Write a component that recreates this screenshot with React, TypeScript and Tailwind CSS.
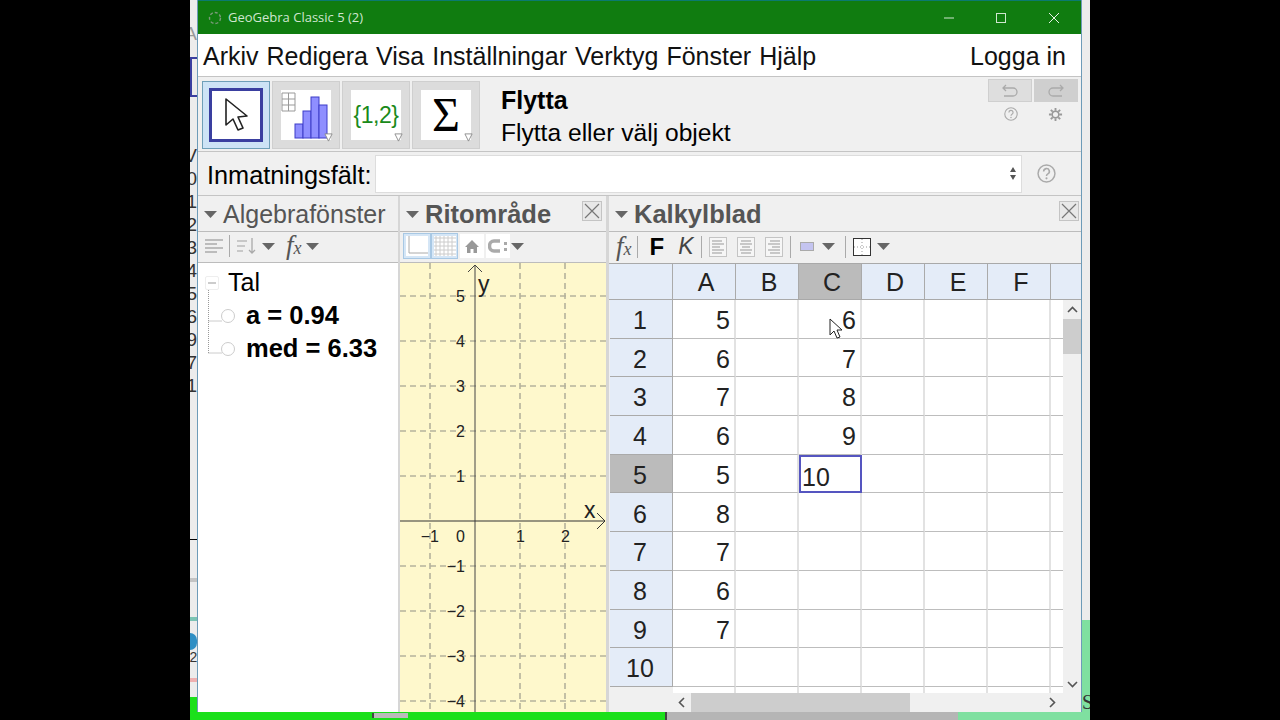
import type { ReactNode } from "react";

const MENU = ["Arkiv", "Redigera", "Visa", "Inställningar", "Verktyg", "Fönster", "Hjälp"];
const COLS = ["A", "B", "C", "D", "E", "F"];
const ROWS = [1, 2, 3, 4, 5, 6, 7, 8, 9, 10];
const VALUES_A = ["5", "6", "7", "6", "5", "8", "7", "6", "7", ""];
const VALUES_C = ["6", "7", "8", "9", "", "", "", "", "", ""];
const EDGE_DIGITS = ["V", "0", "1", "2", "3", "4", "5", "6", "9", "7", "1"];

function Caret({ className = "" }: { className?: string }) {
  return (
    <svg width="13" height="7" viewBox="0 0 13 7" className={className}>
      <path d="M0 0h13L6.5 7z" fill="#666" />
    </svg>
  );
}

function CornerMark() {
  return (
    <svg width="9" height="9" viewBox="0 0 10 10" className="absolute right-[-2px] bottom-[-2px]">
      <path d="M1 1h8L5 9z" fill="#fff" stroke="#888" />
    </svg>
  );
}

function CloseBox() {
  return (
    <div className="w-[20px] h-[20px] border border-[#c4c4c4] bg-[#e8e8e8] flex items-center justify-center">
      <svg width="16" height="16" viewBox="0 0 16 16">
        <path d="M1 1l14 14M15 1L1 15" stroke="#777" strokeWidth="1.2" />
      </svg>
    </div>
  );
}

function ToolButton({ children, active }: { children: ReactNode; active?: boolean }) {
  return (
    <div
      className={
        active
          ? "w-[68px] h-[68px] bg-[#cde3f6] border border-[#6f9fb8] flex items-center justify-center"
          : "w-[68px] h-[68px] bg-[#dcdcdc] border border-[#cfcfcf] flex items-center justify-center"
      }
    >
      {children}
    </div>
  );
}

function AlignIcon({ lines }: { lines: string[] }) {
  return (
    <svg width="18" height="20" viewBox="0 0 18 20">
      <rect x="0.5" y="0.5" width="17" height="19" fill="#f6f6f6" stroke="#c4c4c4" />
      {lines.map((d) => (
        <path key={d} d={d} stroke="#999" strokeWidth="1" />
      ))}
    </svg>
  );
}

function FxIcon() {
  return (
    <span className="font-['Liberation_Serif',serif] italic text-[27px] leading-none text-[#555]">
      f<span className="text-[18px]">x</span>
    </span>
  );
}

function Divider() {
  return <div className="w-px h-[22px] bg-[#aaa]" />;
}

function PanelHeader({ title, bold, close, tight }: { title: string; bold?: boolean; close?: boolean; tight?: boolean }) {
  return (
    <div
      className={
        tight
          ? "h-[36px] shrink-0 flex items-center pl-[6px] pr-[2px] pt-[2px] bg-[#f0f0f0] border-b border-[#bcbcbc] overflow-hidden"
          : "h-[36px] shrink-0 flex items-center pl-[6px] pr-[4px] pt-[2px] bg-[#f0f0f0] border-b border-[#bcbcbc] overflow-hidden"
      }
    >
      <Caret />
      <span
        className={
          bold
            ? "ml-[6px] text-[25.5px] font-bold text-[#555] whitespace-nowrap"
            : "ml-[6px] text-[25px] text-[#555] whitespace-nowrap"
        }
      >
        {title}
      </span>
      {close && (
        <div className="ml-auto mb-[7px]">
          <CloseBox />
        </div>
      )}
    </div>
  );
}

function AlgebraPanel() {
  return (
    <div className="w-[200px] shrink-0 flex flex-col bg-white">
      <PanelHeader title="Algebrafönster" />
      <div className="h-[31px] shrink-0 bg-[#f0f0f0] border-b border-[#bcbcbc] flex items-center pl-[6px] pb-[2px]">
        <svg width="20" height="20" viewBox="0 0 20 20">
          <path d="M1 4h18M1 8h12M1 12h18M1 16h12" stroke="#aaa" strokeWidth="1.4" />
        </svg>
        <div className="ml-[5px]"><Divider /></div>
        <svg width="22" height="20" viewBox="0 0 22 20" className="ml-[6px]">
          <path d="M1 5h10M1 10h8M1 15h6" stroke="#bbb" strokeWidth="1.4" />
          <path d="M16 2v15M13 14l3 3 3-3" stroke="#aaa" strokeWidth="1.3" fill="none" />
        </svg>
        <Caret className="ml-[4px]" />
        <div className="ml-[11px]">
          <FxIcon />
        </div>
        <Caret className="ml-[4px]" />
      </div>
      <div className="relative flex-1 pt-[3px] text-black">
        <div className="h-[33px] flex items-center pl-[7px]">
          <div className="w-[14px] h-[14px] border border-[#eee] rounded-[2px] flex items-center justify-center">
            <div className="w-[8px] h-[2px] bg-[#ccc]" />
          </div>
          <span className="ml-[9px] text-[25px]">Tal</span>
        </div>
        {["a = 0.94", "med = 6.33"].map((row) => (
          <div key={row} className="h-[33px] flex items-center pl-[23px]">
            <div className="w-[14px] h-[14px] rounded-full border border-[#ccc] bg-white" />
            <span className="ml-[11px] text-[25.5px] font-bold whitespace-nowrap">{row}</span>
          </div>
        ))}
        <svg width="20" height="70" viewBox="0 0 20 70" className="absolute left-[10px] top-[27px]">
          <path d="M0.5 0V63M0.5 31H14M0.5 63H14" stroke="#999" strokeDasharray="1 1" fill="none" />
        </svg>
      </div>
    </div>
  );
}

function GraphPanel() {
  const hLines = [33, 78, 123, 168, 213, 303, 348, 393, 438];
  const vLines = [30, 120, 165];
  const yLabels: [string, number][] = [
    ["5", 39], ["4", 84], ["3", 129], ["2", 174], ["1", 219],
    ["−1", 309], ["−2", 354], ["−3", 399], ["−4", 444],
  ];
  return (
    <div className="w-[206px] shrink-0 flex flex-col bg-[#fef8cc]">
      <PanelHeader title="Ritområde" bold close />
      <div className="h-[31px] shrink-0 bg-[#f0f0f0] border-b border-[#bcbcbc] flex items-center pl-[3px] pb-[2px]">
        <div className="w-[28px] h-[26px] bg-[#d5e6f6] border border-[#a8c8e4] flex items-center justify-center">
          <svg width="22" height="20" viewBox="0 0 22 20">
            <rect width="22" height="20" fill="#fff" />
            <path d="M3 0v17h19" stroke="#aaa" fill="none" />
          </svg>
        </div>
        <div className="w-[27px] h-[26px] bg-[#d5e6f6] border border-[#a8c8e4] flex items-center justify-center">
          <svg width="22" height="20" viewBox="0 0 22 20">
            <rect width="22" height="20" fill="#fff" />
            <path d="M2 0v20M6 0v20M10 0v20M14 0v20M18 0v20M0 2h22M0 6h22M0 10h22M0 14h22M0 18h22" stroke="#ccc" strokeWidth="1" />
          </svg>
        </div>
        <div className="ml-[2px] w-[24px] h-[24px] bg-white flex items-center justify-center">
          <svg width="16" height="16" viewBox="0 0 16 16">
            <path d="M8 2L1 9h2v6h3.5v-4h3v4H13V9h2z" fill="#999" />
          </svg>
        </div>
        <div className="ml-[2px] w-[24px] h-[24px] bg-white flex items-center justify-center">
          <svg width="20" height="16" viewBox="0 0 20 16">
            <path d="M12 3H6a4.5 5 0 0 0 0 10h6" stroke="#aaa" strokeWidth="3.5" fill="none" />
            <path d="M16 4h3v3h-3zM16 10h3v3h-3z" fill="#aaa" />
          </svg>
        </div>
        <Caret className="ml-[1px]" />
      </div>
      <svg width="206" height="449" viewBox="0 0 206 449" className="block flex-1">
        {hLines.map((y) => (
          <path key={y} d={`M0 ${y}H206`} stroke="#b5b29c" strokeWidth="1.4" strokeDasharray="6 4" />
        ))}
        {vLines.map((x) => (
          <path key={x} d={`M${x} 0V449`} stroke="#b5b29c" strokeWidth="1.6" strokeDasharray="6 4" />
        ))}
        <path d="M75 449V2M68 9l7-7 7 7" stroke="#444" fill="none" />
        <path d="M0 258H204M197 250l8 8-8 8" stroke="#333" fill="none" />
        <g fontSize="16" fill="#222" fontFamily="'Liberation Sans', sans-serif" textAnchor="end">
          {yLabels.map(([t, y]) => (
            <text key={t} x="65" y={y}>{t}</text>
          ))}
          <text x="39" y="279">−1</text>
          <text x="65" y="279">0</text>
          <text x="125" y="279">1</text>
          <text x="170" y="279">2</text>
        </g>
        <text x="78" y="29" fontSize="23" fill="#222" fontFamily="'Liberation Sans', sans-serif">y</text>
        <text x="184" y="255" fontSize="23" fill="#222" fontFamily="'Liberation Sans', sans-serif">x</text>
      </svg>
    </div>
  );
}

function SheetPanel() {
  return (
    <div className="flex-1 min-w-0 flex flex-col bg-[#f0f0f0]">
      <PanelHeader title="Kalkylblad" bold close tight />
      <div className="h-[31px] shrink-0 bg-[#f0f0f0] flex items-center pl-[7px] pb-[2px]">
        <FxIcon />
        <div className="ml-[5px]"><Divider /></div>
        <span className="ml-[12px] text-[24px] font-bold text-black">F</span>
        <span className="ml-[14px] text-[23px] italic text-[#444]">K</span>
        <div className="ml-[7px]"><Divider /></div>
        <div className="ml-[7px] flex gap-[10px]">
          <AlignIcon lines={["M3 4h10", "M3 7h12", "M3 10h8", "M3 13h12", "M3 16h10"]} />
          <AlignIcon lines={["M4 4h10", "M3 7h12", "M5 10h8", "M3 13h12", "M4 16h10"]} />
          <AlignIcon lines={["M5 4h10", "M3 7h12", "M7 10h8", "M3 13h12", "M5 16h10"]} />
        </div>
        <div className="ml-[7px]"><Divider /></div>
        <div className="ml-[9px] w-[14px] h-[9px] bg-[#c4c4f0] border border-[#aaa]" />
        <Caret className="ml-[8px]" />
        <div className="ml-[10px]"><Divider /></div>
        <svg width="18" height="18" viewBox="0 0 18 18" className="ml-[7px]">
          <rect x="0.5" y="0.5" width="17" height="17" fill="#fff" stroke="#333" />
          <path d="M9 1v16M1 9h16" stroke="#999" strokeDasharray="1 2" />
        </svg>
        <Caret className="ml-[6px]" />
      </div>
      <div className="h-[37px] shrink-0 flex bg-[#e4ecf8] border-y border-y-[#a9a9a9] text-[25px] text-[#222] pl-px">
        <div className="w-[63px] border-r border-[#aaa]" />
        {COLS.map((c) => (
          <div
            key={c}
            className={
              c === "C"
                ? "w-[63px] bg-[#bbbbbb] border-r border-[#aaa] flex items-center justify-center pl-[4px] pt-[2px]"
                : "w-[63px] border-r border-[#aaa] flex items-center justify-center pl-[4px] pt-[2px]"
            }
          >
            {c}
          </div>
        ))}
      </div>
      <div className="flex flex-1 min-h-0">
        <div className="w-[454px] shrink-0 overflow-hidden pl-px">
          {ROWS.map((r, i) => (
            <div key={r} className="h-[38.7px] flex text-[25px] text-[#222]">
              <div
                className={
                  r === 5
                    ? "w-[63px] shrink-0 bg-[#bbbbbb] border-r border-b border-[#aaa] flex items-center justify-center pt-[4px] pr-[2px]"
                    : "w-[63px] shrink-0 bg-[#e4ecf8] border-r border-b border-[#aaa] flex items-center justify-center pt-[4px] pr-[2px]"
                }
              >
                {r}
              </div>
              {COLS.map((c) => {
                const value = c === "A" ? VALUES_A[i] : c === "C" ? VALUES_C[i] : "";
                if (c === "C" && r === 5) {
                  return (
                    <div key={c} className="w-[63px] shrink-0 border-2 border-[#5555c0] bg-white flex items-center pl-[1px] pt-[7px]">
                      10
                    </div>
                  );
                }
                return (
                  <div key={c} className="w-[63px] shrink-0 bg-white border-r-2 border-r-[#e2e2e2] border-b border-b-[#bdbdbd] flex items-center justify-end pr-[4px] pt-[4px]">
                    {value}
                  </div>
                );
              })}
              <div className="flex-1 bg-white border-b border-b-[#bdbdbd]" />
            </div>
          ))}
          <div className="h-[6px] flex">
            <div className="w-[63px] shrink-0" />
            {COLS.map((c) => (
              <div key={c} className="w-[63px] shrink-0 bg-white border-r-2 border-r-[#e2e2e2]" />
            ))}
            <div className="flex-1 bg-white" />
          </div>
        </div>
        <div className="flex-1 flex flex-col items-center bg-[#f0f0f0]">
          <svg width="11" height="7" viewBox="0 0 11 7" className="mt-[6px]">
            <path d="M1 6l4.5-4.5L10 6" stroke="#555" strokeWidth="1.6" fill="none" />
          </svg>
          <div className="mt-[6px] w-full h-[35px] bg-[#cdcdcd]" />
          <svg width="11" height="7" viewBox="0 0 11 7" className="mt-auto mb-[5px]">
            <path d="M1 1l4.5 4.5L10 1" stroke="#555" strokeWidth="1.6" fill="none" />
          </svg>
        </div>
      </div>
      <div className="h-[19px] shrink-0 flex items-center pl-[63px] bg-[#f0f0f0]">
        <div className="w-[19px] flex justify-center">
          <svg width="7" height="11" viewBox="0 0 7 11">
            <path d="M6 1L1.5 5.5 6 10" stroke="#555" strokeWidth="1.6" fill="none" />
          </svg>
        </div>
        <div className="w-[219px] h-full bg-[#cdcdcd]" />
        <svg width="7" height="11" viewBox="0 0 7 11" className="ml-[139px]">
          <path d="M1 1l4.5 4.5L1 10" stroke="#555" strokeWidth="1.6" fill="none" />
        </svg>
      </div>
    </div>
  );
}

function TitleBar() {
  return (
    <div className="h-[34px] shrink-0 bg-[#107c10] border-t border-[#0b7a70] flex items-center text-[#cfe6cf]">
      <svg width="14" height="14" viewBox="0 0 14 14" className="ml-[10px]">
        <circle cx="7" cy="7" r="5.5" fill="none" stroke="#7a9a7a" strokeWidth="1.4" strokeDasharray="3 2" />
      </svg>
      <span className="ml-[6px] text-[13px] font-['Open_Sans',sans-serif] whitespace-nowrap">GeoGebra Classic 5 (2)</span>
      <svg width="12" height="12" viewBox="0 0 12 12" className="ml-[580px]">
        <path d="M1 6h10" stroke="#cfe6cf" />
      </svg>
      <svg width="12" height="12" viewBox="0 0 12 12" className="ml-[40px]">
        <rect x="1.5" y="1.5" width="9" height="9" fill="none" stroke="#cfe6cf" />
      </svg>
      <svg width="12" height="12" viewBox="0 0 12 12" className="ml-[41px]">
        <path d="M1 1l10 10M11 1L1 11" stroke="#e8f3e8" />
      </svg>
    </div>
  );
}

function HelpIcon({ size }: { size: number }) {
  return (
    <svg width={size} height={size} viewBox="0 0 18 18">
      <circle cx="9" cy="9" r="8" fill="none" stroke="#aaa" strokeWidth="1.4" />
      <path d="M6.3 7a2.7 2.7 0 1 1 4 2.4c-.9.5-1.3 1-1.3 2" stroke="#aaa" strokeWidth="1.5" fill="none" />
      <circle cx="9" cy="13.6" r="1" fill="#aaa" />
    </svg>
  );
}

function Toolbar() {
  return (
    <div className="h-[76px] shrink-0 bg-[#f0f0f0] border-y border-[#c4c4c4] flex items-center pl-[4px] pt-[2px]">
      <div className="flex gap-[2px]">
        <ToolButton active>
          <div className="w-[54px] h-[54px] bg-white border-[3px] border-[#3a3fa0] flex items-center justify-center">
            <svg width="26" height="36" viewBox="0 0 26 36">
              <path d="M3 2v26l7-6 5 11 5-2-5-11 9-1z" fill="#fff" stroke="#222" strokeWidth="1.6" strokeLinejoin="round" />
            </svg>
          </div>
        </ToolButton>
        <ToolButton>
          <div className="relative w-[50px] h-[50px] bg-white">
            <svg width="50" height="50" viewBox="0 0 50 50">
              <path d="M1 3h13v18H1zM1 9h13M1 15h13M7.5 3v18" stroke="#999" fill="#fff" />
              <g fill="#8f8fff" stroke="#3c3cc8">
                <rect x="14" y="34" width="8" height="14" />
                <rect x="22" y="21" width="8" height="27" />
                <rect x="30" y="7" width="8" height="41" />
                <rect x="38" y="15" width="8" height="33" />
              </g>
            </svg>
            <CornerMark />
          </div>
        </ToolButton>
        <ToolButton>
          <div className="relative w-[50px] h-[50px] bg-white flex items-center justify-center text-[23px] text-[#1a8a1a] tracking-[-0.5px]">
            {"{1,2}"}
            <CornerMark />
          </div>
        </ToolButton>
        <ToolButton>
          <div className="relative w-[50px] h-[50px] bg-white flex items-center justify-center text-[48px] leading-none text-black font-['Liberation_Serif',serif]">
            Σ
            <CornerMark />
          </div>
        </ToolButton>
      </div>
      <div className="ml-[21px] mt-[3px] text-black">
        <div className="text-[25px] font-bold leading-[33px]">Flytta</div>
        <div className="text-[24.6px] leading-[32px]">Flytta eller välj objekt</div>
      </div>
      <div className="ml-auto mr-[3px] self-start flex flex-col">
        <div className="flex gap-[2px]">
          <div className="w-[44px] h-[23px] bg-[#dedede] border border-[#cfcfcf] flex items-center justify-center">
            <svg width="18" height="14" viewBox="0 0 18 14">
              <path d="M2 4h10a4 4 0 0 1 0 8H3M5 1L2 4l3 3" stroke="#aaa" strokeWidth="1.3" fill="none" />
            </svg>
          </div>
          <div className="w-[44px] h-[23px] bg-[#cfcfcf] flex items-center justify-center">
            <svg width="18" height="14" viewBox="0 0 18 14">
              <path d="M16 4H6a4 4 0 0 0 0 8h9M13 1l3 3-3 3" stroke="#aaa" strokeWidth="1.3" fill="none" />
            </svg>
          </div>
        </div>
        <div className="flex mt-[5px]">
          <div className="w-[45px] flex justify-center">
            <HelpIcon size={14} />
          </div>
          <div className="w-[45px] flex justify-center">
            <svg width="15" height="15" viewBox="0 0 16 16">
              <path d="M8 1v3M8 12v3M1 8h3M12 8h3M3 3l2 2M11 11l2 2M13 3l-2 2M5 11l-2 2" stroke="#999" strokeWidth="2" />
              <circle cx="8" cy="8" r="3.5" fill="none" stroke="#999" strokeWidth="1.6" />
            </svg>
          </div>
        </div>
      </div>
    </div>
  );
}

function InputBar() {
  return (
    <div className="h-[44px] shrink-0 bg-[#f0f0f0] border-b border-[#c4c4c4] flex items-center pl-[9px]">
      <span className="text-[25.3px] text-black w-[168px] whitespace-nowrap pt-[5px]">Inmatningsfält:</span>
      <div className="w-[647px] h-[38px] bg-white border border-[#ddd] flex items-center justify-end pr-[4px]">
        <svg width="8" height="15" viewBox="0 0 8 15">
          <path d="M4 1l3 5H1zM4 14l3-5H1z" fill="#555" />
        </svg>
      </div>
      <div className="ml-[15px]">
        <HelpIcon size={19} />
      </div>
    </div>
  );
}

function LeftEdge() {
  return (
    <div className="w-[8px] shrink-0 bg-[#ececec] border-r border-[#6d9bb8] flex flex-col items-center overflow-hidden text-[#333] text-[19px] leading-[23px]">
      <div className="h-[22px] shrink-0" />
      <div className="h-[23px] shrink-0 w-[14px] self-end text-right text-[#999]">A</div>
      <div className="h-[12px] shrink-0" />
      <div className="h-[40px] shrink-0 border-y-2 border-l-2 border-[#3a3fa0] w-full" />
      <div className="h-[47px] shrink-0" />
      {EDGE_DIGITS.map((d, i) => (
        <div key={i} className="h-[23px] shrink-0 w-[14px] text-right self-end">{d}</div>
      ))}
      <div className="h-[142px] shrink-0" />
      <div className="h-px w-full shrink-0 bg-black" />
      <div className="h-[38px] shrink-0" />
      <div className="h-[4px] w-full shrink-0 bg-[#c4c4c4]" />
      <div className="h-[35px] shrink-0" />
      <div className="h-[4px] w-full shrink-0 bg-[#7cc4b4]" />
      <div className="h-[12px] shrink-0" />
      <div className="h-[17px] w-[14px] shrink-0 self-end rounded-full bg-[#2f8fc4]" />
      <div className="h-[14px] shrink-0 text-[14px] leading-[14px]">2</div>
      <div className="h-[14px] shrink-0" />
      <div className="h-[4px] w-full shrink-0 bg-[#eeb0b0]" />
      <div className="h-[15px] shrink-0" />
      <div className="flex-1 w-full bg-[#1be01b]" />
    </div>
  );
}

export default function App() {
  return (
    <div className="w-[1280px] h-[720px] bg-black overflow-hidden pl-[190px] font-['Liberation_Sans',Arial,sans-serif]">
      <div className="w-[900px] h-[720px] flex flex-col">
        <div className="flex h-[712px]">
          <LeftEdge />
          <div className="w-[884px] shrink-0 flex flex-col bg-white border-r border-[#6d9bb8]">
            <TitleBar />
            <div className="h-[42px] shrink-0 bg-white flex items-center justify-between pl-[5px] pr-[15px] pt-[3px] text-[25px] text-[#111]">
              <div className="flex gap-[8px]">
                {MENU.map((m) => (
                  <span key={m}>{m}</span>
                ))}
              </div>
              <span>Logga in</span>
            </div>
            <Toolbar />
            <InputBar />
            <div className="flex flex-1 min-h-0 bg-[#d6d6d6]">
              <AlgebraPanel />
              <div className="w-[2px] shrink-0" />
              <GraphPanel />
              <div className="w-[3px] shrink-0" />
              <SheetPanel />
            </div>
          </div>
          <div className="flex-1 flex flex-col overflow-hidden">
            <div className="flex-1 bg-[#ececec]" />
            <div className="h-[92px] bg-[#7fe0a0] flex items-end font-['Liberation_Serif',serif] text-[20px] leading-[20px] text-[#333]">
              S
            </div>
          </div>
        </div>
        <div className="h-[8px] flex">
          <div className="w-[475px] bg-[#1be01b] pl-[182px] pt-px">
            <div className="w-[36px] h-[5px] bg-[#bbbbbb] border-l-2 border-[#444]" />
          </div>
          <div className="w-[293px] bg-[#b5b5b5] border-l-2 border-[#444]" />
          <div className="flex-1 bg-[#7fe0a0]" />
        </div>
      </div>
      <svg width="16" height="22" viewBox="0 0 16 22" className="absolute left-[829px] top-[318px]">
        <path d="M1 1v16l4-4 3 7 3-1-3-7h5z" fill="#fff" stroke="#222" strokeWidth="1" />
      </svg>
    </div>
  );
}
